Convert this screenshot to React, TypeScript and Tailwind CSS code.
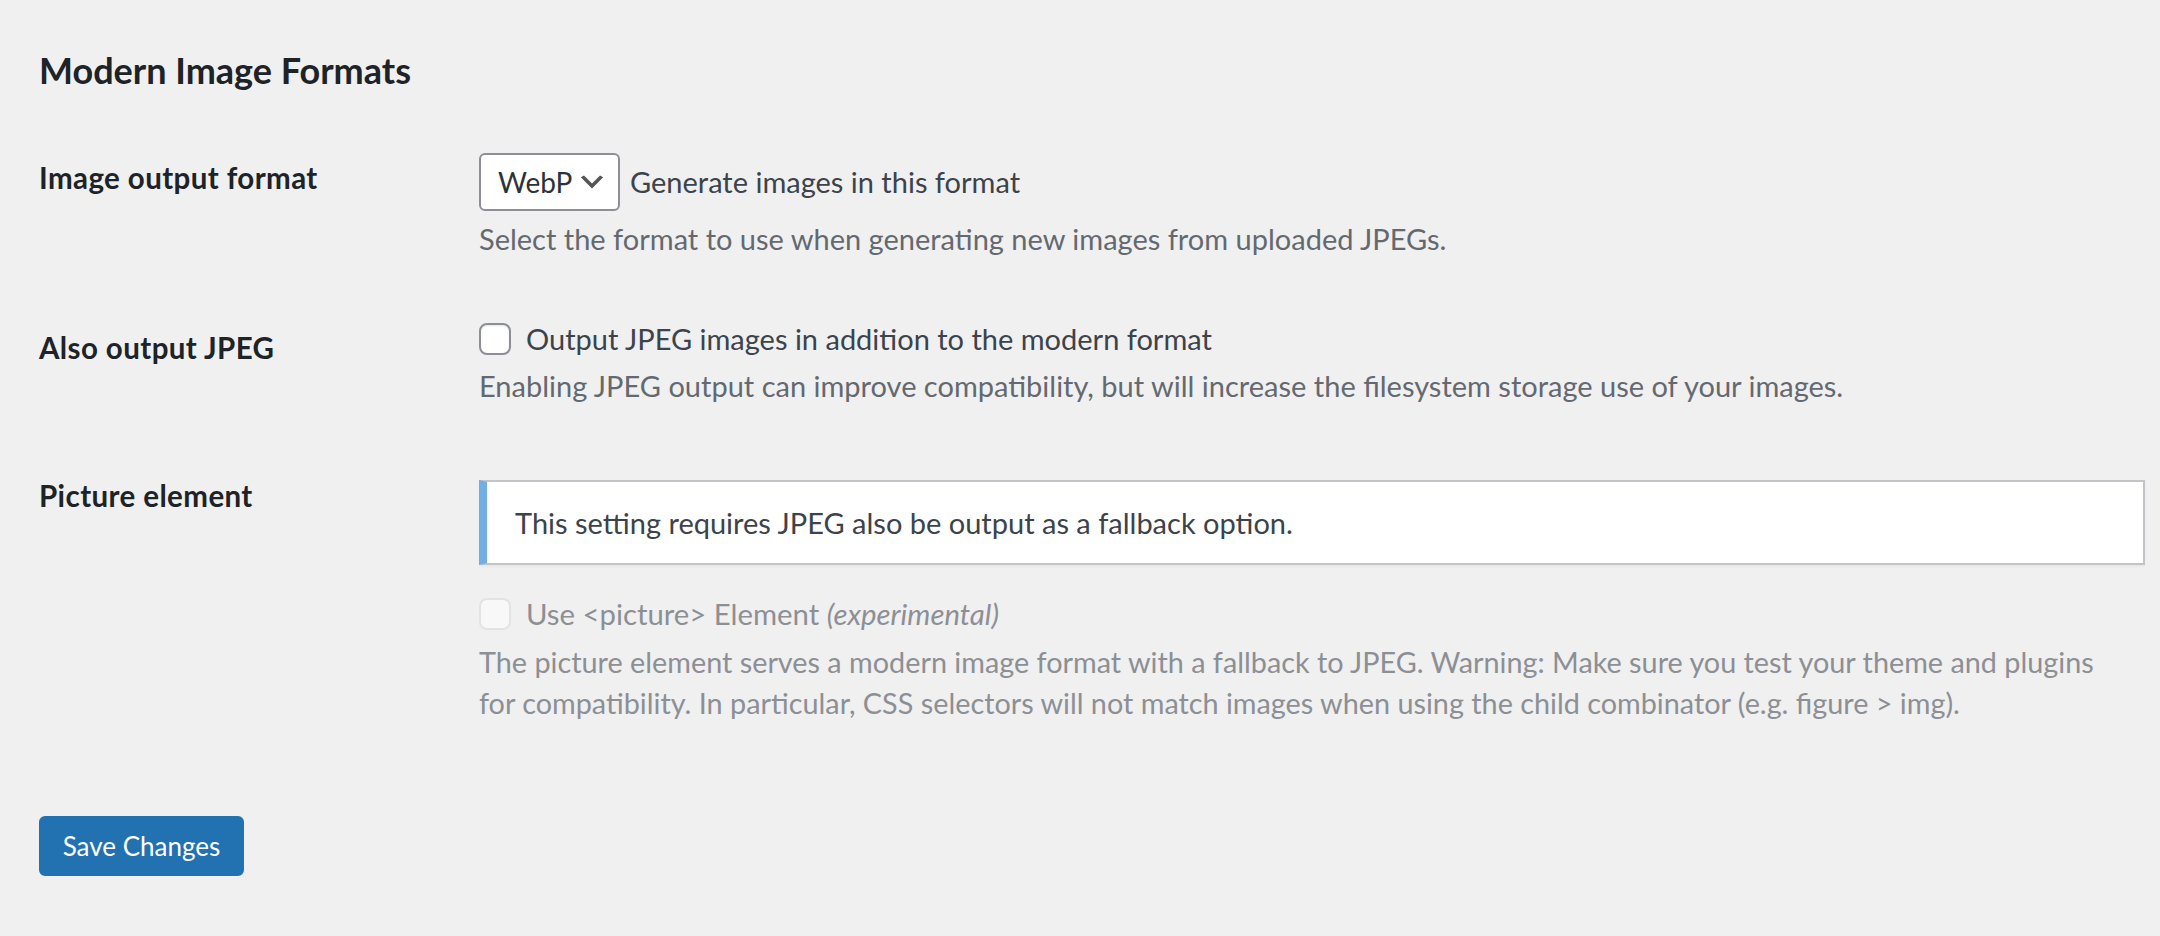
import React from "react";

function Chevron() {
  return (
    <svg width="32" height="32" viewBox="0 0 20 20" className="shrink-0">
      <path d="M5 6l5 5 5-5 2 1-7 7-7-7 2-1z" fill="#555" />
    </svg>
  );
}

export default function App() {
  return (
    <div className="min-h-screen w-full bg-[#f0f0f1] font-[Lato,sans-serif] pl-[39px] pt-[48px]">
      <h2 className="text-[36px] leading-[44px] font-bold text-[#1d2327]">Modern Image Formats</h2>

      {/* Row 1 */}
      <div className="flex">
        <div className="w-[440px] shrink-0 pt-[68px] text-[29.5px] leading-[36px] tracking-[0.4px] font-bold text-[#1d2327]">
          Image output format
        </div>
        <div className="flex-1 pt-[61px]">
          <div className="flex items-center gap-[10px]">
            <div className="flex h-[58px] w-[141px] items-center justify-between rounded-[6px] border-2 border-[#8c8f94] bg-white pl-[17px] pr-[10px] text-[28px] text-[#2c3338]">
              <span className="leading-[42px]">WebP</span>
              <Chevron />
            </div>
            <span className="text-[29px] leading-[42px] text-[#3c434a]">Generate images in this format</span>
          </div>
          <p className="mt-[7px] text-[29px] leading-[42px] text-[#646970]">
            Select the format to use when generating new images from uploaded JPEGs.
          </p>
        </div>
      </div>

      {/* Row 2 */}
      <div className="flex">
        <div className="w-[440px] shrink-0 pt-[70px] text-[29.5px] leading-[36px] tracking-[0.4px] font-bold text-[#1d2327]">
          Also output JPEG
        </div>
        <div className="flex-1 pt-[58px]">
          <label className="flex items-center h-[42px]">
            <span className="h-[32px] w-[32px] shrink-0 rounded-[8px] border-2 border-[#8c8f94] bg-white shadow-[inset_0_1px_2px_rgba(0,0,0,0.1)]" />
            <span className="ml-[15px] text-[29px] leading-[42px] text-[#3c434a]">
              Output JPEG images in addition to the modern format
            </span>
          </label>
          <p className="mt-[5px] text-[29px] leading-[42px] text-[#646970]">
            Enabling JPEG output can improve compatibility, but will increase the filesystem storage use of your images.
          </p>
        </div>
      </div>

      {/* Row 3 */}
      <div className="flex">
        <div className="w-[440px] shrink-0 pt-[71px] text-[29.5px] leading-[36px] tracking-[0.4px] font-bold text-[#1d2327]">
          Picture element
        </div>
        <div className="flex-1 pt-[73px]">
          <div className="flex h-[85px] w-[1666px] items-center border-2 border-l-[8px] border-[#c3c4c7] border-l-[#72aee6] bg-white pl-[28px] shadow-[0_2px_2px_rgba(0,0,0,0.04)]">
            <span className="text-[29px] leading-[42px] text-[#3c434a]">
              This setting requires JPEG also be output as a fallback option.
            </span>
          </div>
          <label className="mt-[28px] flex items-center h-[42px]">
            <span className="h-[32px] w-[32px] shrink-0 rounded-[8px] border-2 border-[#dcdcde]/75 bg-white/50" />
            <span className="ml-[15px] text-[29.3px] leading-[42px] text-[#8c8f94]">
              Use &lt;picture&gt; Element <em className="italic">(experimental)</em>
            </span>
          </label>
          <p className="mt-[7px] text-[28.8px] leading-[41px] text-[#8c8f94]">
            The picture element serves a modern image format with a fallback to JPEG. Warning: Make sure you test your theme and plugins
            <br />
            for compatibility. In particular, CSS selectors will not match images when using the child combinator (e.g. figure &gt; img).
          </p>
        </div>
      </div>

      <div className="pt-[92px] pb-[60px]">
        <button className="h-[60px] w-[205px] rounded-[6px] border-2 border-[#2271b1] bg-[#2271b1] text-[26px] text-white">
          Save Changes
        </button>
      </div>
    </div>
  );
}
